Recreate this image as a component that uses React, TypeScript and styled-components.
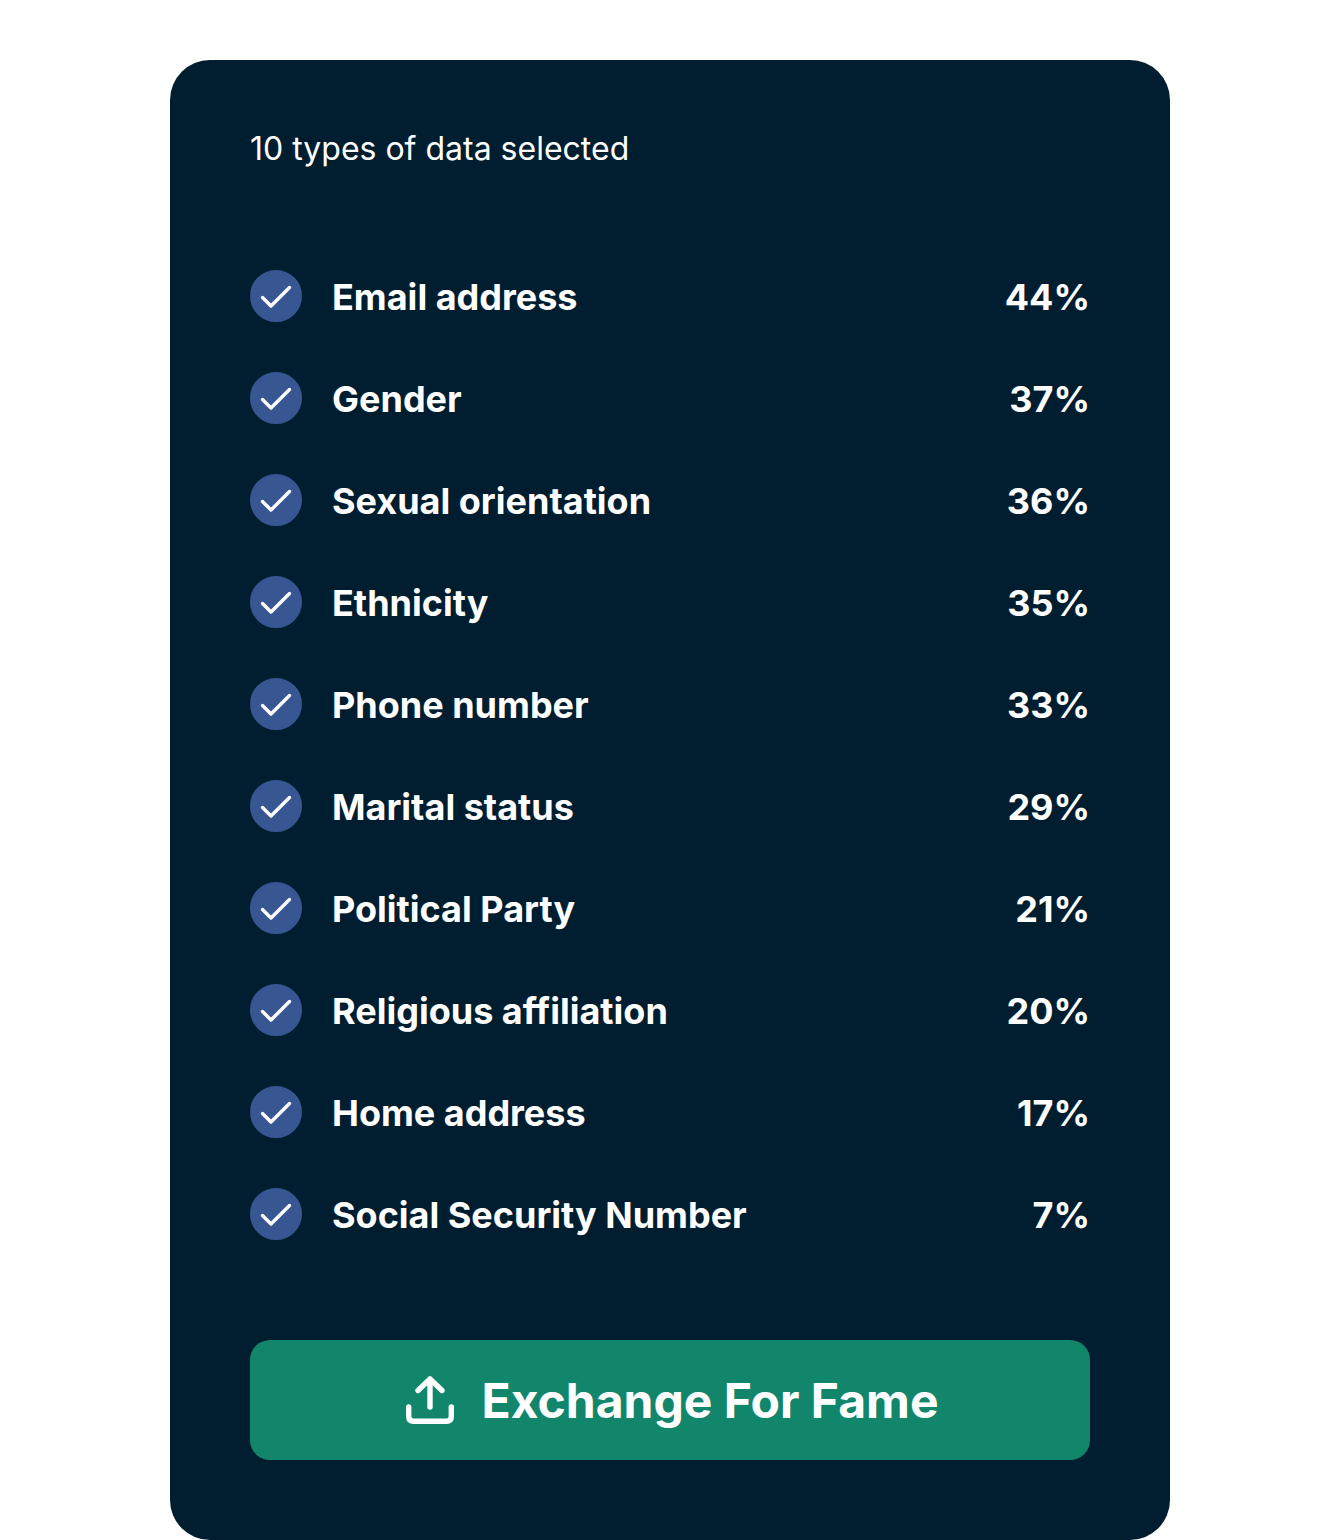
import React, { useState } from "react";
import styled, { createGlobalStyle } from "styled-components";

const GlobalStyle = createGlobalStyle`
  *, *::before, *::after { box-sizing: border-box; }
  body { margin: 0; background: #fff; font-family: Inter, "Liberation Sans", sans-serif; }
`;

const Page = styled.main`
  padding: 60px 24px 0;
`;

const Card = styled.form`
  max-width: 1000px;
  margin: 0 auto;
  padding: 68px 80px 80px;
  border-radius: 40px;
  background: #001e2f;
  color: #fff;
`;

const Summary = styled.p`
  margin: 0;
  font-size: 32px;
  font-weight: 400;
  line-height: 42px;
`;

const List = styled.ul`
  display: flex;
  flex-direction: column;
  gap: 50px;
  margin: 100px 0;
  padding: 0;
  list-style: none;
`;

const Row = styled.label`
  display: flex;
  align-items: center;
  gap: 30px;
  height: 52px;
  font-size: 36px;
  font-weight: 700;
  line-height: 44px;
  cursor: pointer;
`;

const Tick = styled.span`
  display: grid;
  flex: none;
  width: 52px;
  height: 52px;
  > * { grid-area: 1 / 1; }
  svg { pointer-events: none; }
`;

const Checkbox = styled.input`
  appearance: none;
  width: 52px;
  height: 52px;
  margin: 0;
  border: 2px solid #375692;
  border-radius: 50%;
  cursor: pointer;
  &:checked { background: #375692; }
  &:not(:checked) + svg { visibility: hidden; }
`;

const Label = styled.span`
  padding-top: 2px;
`;

const Name = styled(Label)`
  flex: 1;
`;

const Submit = styled.button`
  display: flex;
  align-items: center;
  justify-content: center;
  gap: 28px;
  width: 100%;
  height: 120px;
  padding: 0 0 0 4px;
  border: 0;
  border-radius: 20px;
  background: #11866b;
  color: #fff;
  font: 700 48px/60px Inter, "Liberation Sans", sans-serif;
  cursor: pointer;
`;

const items: { name: string; percent: number }[] = [
  { name: "Email address", percent: 44 },
  { name: "Gender", percent: 37 },
  { name: "Sexual orientation", percent: 36 },
  { name: "Ethnicity", percent: 35 },
  { name: "Phone number", percent: 33 },
  { name: "Marital status", percent: 29 },
  { name: "Political Party", percent: 21 },
  { name: "Religious affiliation", percent: 20 },
  { name: "Home address", percent: 17 },
  { name: "Social Security Number", percent: 7 },
];

const CheckMark = () => (
  <svg width="52" height="52" viewBox="0 0 52 52" fill="none" aria-hidden="true">
    <path d="M12.5 27.5L21 36L39.5 17.5" stroke="#fff" strokeWidth="3.4" strokeLinecap="round" strokeLinejoin="round" />
  </svg>
);

const UploadIcon = () => (
  <svg width="48" height="48" viewBox="0 0 48 48" fill="none" stroke="#fff" strokeWidth="5.4" strokeLinecap="round" strokeLinejoin="round" aria-hidden="true">
    <path d="M2.7 31V40.5Q2.7 45.3 7.5 45.3H40.5Q45.3 45.3 45.3 40.5V31" />
    <path d="M24 31V3M12 14.5L24 2.9L36 14.5" />
  </svg>
);

export default function App() {
  const [selected, setSelected] = useState<string[]>(items.map((item) => item.name));

  const toggle = (name: string) =>
    setSelected((current) =>
      current.includes(name) ? current.filter((n) => n !== name) : [...current, name]
    );

  return (
    <>
      <GlobalStyle />
      <Page>
        <Card onSubmit={(event) => event.preventDefault()}>
          <Summary>{`${selected.length} types of data selected`}</Summary>
          <List>
            {items.map((item) => (
              <li key={item.name}>
                <Row>
                  <Tick>
                    <Checkbox
                      type="checkbox"
                      checked={selected.includes(item.name)}
                      onChange={() => toggle(item.name)}
                    />
                    <CheckMark />
                  </Tick>
                  <Name>{item.name}</Name>
                  <Label>{`${item.percent}%`}</Label>
                </Row>
              </li>
            ))}
          </List>
          <Submit type="submit">
            <UploadIcon />
            <Label>Exchange For Fame</Label>
          </Submit>
        </Card>
      </Page>
    </>
  );
}
